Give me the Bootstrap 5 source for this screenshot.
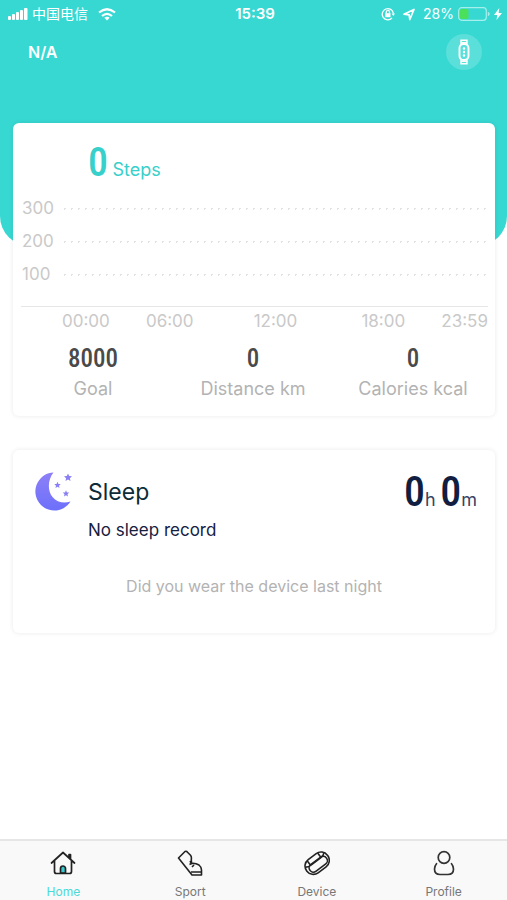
<!DOCTYPE html>
<html lang="en">
<head>
<meta charset="utf-8">
<meta name="viewport" content="width=device-width, initial-scale=1">
<title>Home</title>
<link href="https://cdn.jsdelivr.net/npm/bootstrap@5.3.0/dist/css/bootstrap.min.css" rel="stylesheet">
<style>
body{font-family:Inter,"Noto Sans CJK SC",sans-serif;background:#fff;color:#16203f}
.hero{background:#37d8d2;color:#fff;height:246px;border-radius:0 0 30px 30px}
.status{height:28px;padding:0 5px 0 8px;font-size:14px;line-height:20px}
.status .side{flex:1 1 0}
.carrier{margin:0 10px 0 4px}
.clock{font-weight:600;font-size:15px}
.topbar{padding:6px 25px 0 28px}
.user{font-size:16px;font-weight:600}
.band-btn{width:36px;height:36px;background:rgba(255,255,255,.18);border:0}
.content{margin-top:-123px;padding:0 12px 0 13px}
.panel{background:#fff;border-radius:6px;box-shadow:0 0 5px rgba(0,0,0,.09)}
.digits{font-family:"Roboto Condensed","Liberation Sans Narrow",Roboto,sans-serif;font-weight:500}
.steps{color:#37d0cb;padding:16px 0 0 75px;height:69px;line-height:48px}
.steps .digits{font-size:40px}
.steps .unit{font-size:18px}
.chart{padding:0 7px 0 8px;color:#c9c9c9;font-size:17px}
.grid-row{height:33px;line-height:33px}
.grid-row .lbl{width:40px;padding-left:1px}
.dots{height:3px;background:radial-gradient(circle,#e2e2e2 1px,transparent 1px) 0 0/7px 3px round}
.axis{border-top:1px solid #e6e6e6;margin-top:15px;padding:1px 0 1px 41px;line-height:26px}
.axis .mid{padding:0 28px 0 24px}
.stat-num{font-size:25px;line-height:30px;color:#4a4a4a}
.stat-lbl{font-size:18px;line-height:30px;color:#b3b3b3}
.stats{padding:9px 2px 12px 0}
.sleep{margin-top:34px;padding:22px 18px 35px 22px}
.sleep h2{font-size:23px;line-height:40px;font-weight:400;color:#0d2c38}
.sleep-text{padding-left:15px}
.sleep-time{line-height:40px;color:#121d42}
.sleep-time .digits{font-size:42px}
.sleep-time .u{font-size:18px;color:#3a4263}
.record{font-size:17px;line-height:36px}
.hint{font-size:16px;line-height:24px;color:#b3b3b3;margin-top:26px;padding-right:4px}
.tabs{background:#f9f9f9;border-top:2px solid #e6e6e6;height:61px}
.tabs a{font-size:12px;line-height:16px;color:#777;padding-top:9px}
.tabs a svg{margin-bottom:8px}
.tabs a.active{color:#4bd9d8}
</style>
<script src="https://cdn.jsdelivr.net/npm/bootstrap@5.3.0/dist/js/bootstrap.bundle.min.js"></script>
</head>
<body class="d-flex flex-column min-vh-100">
<header class="hero">
  <div class="status d-flex align-items-center">
    <div class="side d-flex align-items-center">
      <svg width="20" height="13" viewBox="0 0 20 13" fill="#fff" aria-hidden="true"><rect y="8" width="3" height="4" rx="1"/><rect x="4" y="6" width="3" height="6" rx="1"/><rect x="8" y="4" width="3" height="8" rx="1"/><rect x="12" y="2" width="3" height="10" rx="1"/><rect x="16" width="3.500" height="12" rx="1"/></svg>
      <span class="carrier">中国电信</span>
      <svg width="18" height="13" viewBox="0 0 18 13" fill="none" stroke="#fff" stroke-width="2.200" aria-hidden="true"><path d="M1 4.500Q9-2 17 4.500M4 8Q9 3.600 14 8"/><path d="M6.300 9.800Q9 7.700 11.700 9.800L9 12.600z" fill="#fff" stroke="none"/></svg>
    </div>
    <span class="clock">15:39</span>
    <div class="side d-flex align-items-center justify-content-end">
      <svg width="14" height="14" viewBox="0 0 14 14" fill="none" stroke="#fff" stroke-width="1.300" aria-hidden="true"><path d="M11 11A5.600 5.600 0 1 1 12.400 6.500"/><path d="M10.600 6.500h3.400l-1.700 2.500z" fill="#fff" stroke="none"/><rect x="4.300" y="6.200" width="5.200" height="4" fill="#fff" stroke="none"/><path d="M5.300 6.500V5a1.600 1.600 0 0 1 3.200 0v1.500"/></svg>
      <svg class="ms-2" width="12" height="13" viewBox="0 0 12 13" fill="none" stroke="#fff" stroke-width="1.700" stroke-linejoin="round" aria-hidden="true"><path d="M1 6.200 11 1.500 6.800 11.500 6.200 6.800z"/></svg>
      <span class="ms-2">28%</span>
      <svg class="ms-1" width="32" height="14" viewBox="0 0 32 14" aria-hidden="true"><rect x=".7" y=".7" width="27.600" height="12.600" rx="3" fill="none" stroke="#a5efec" stroke-width="1.200"/><rect x="2" y="2" width="8.500" height="10" rx="1.500" fill="#4be05c"/><path d="M29.800 4.800q2 .7 2 2.200t-2 2.200z" fill="#a5efec"/></svg>
      <svg class="ms-1" width="8" height="12" viewBox="0 0 8 12" fill="#fff" aria-hidden="true"><path d="M5.300 0 0 7h3.300L2.500 12 8 5H4.600z"/></svg>
    </div>
  </div>
  <div class="topbar d-flex justify-content-between align-items-center">
    <span class="user">N/A</span>
    <button class="band-btn rounded-circle p-0 d-flex align-items-center justify-content-center" type="button" aria-label="Band">
      <svg width="12" height="26" viewBox="0 0 12 26" fill="none" stroke="#fff" aria-hidden="true"><path d="M3 5.500V1.200h6v4.300M3 20.500v4.300h6v-4.300M3.500 3.800h5M3.500 22.200h5" stroke-width="1.400"/><rect x="1.500" y="5" width="9" height="16" rx="4" stroke-width="1.900"/><g fill="#fff" stroke="none"><circle cx="6" cy="9.500" r="1.200"/><circle cx="6" cy="13" r="1.200"/><circle cx="6" cy="16.500" r="1.200"/></g></svg>
    </button>
  </div>
</header>

<main class="content flex-grow-1">
  <section class="panel">
    <div class="steps"><span class="digits">0</span> <span class="unit">Steps</span></div>
    <div class="chart">
      <div class="grid-row d-flex align-items-center"><span class="lbl">300</span><div class="dots flex-grow-1"></div></div>
      <div class="grid-row d-flex align-items-center"><span class="lbl">200</span><div class="dots flex-grow-1"></div></div>
      <div class="grid-row d-flex align-items-center"><span class="lbl">100</span><div class="dots flex-grow-1"></div></div>
      <div class="axis d-flex justify-content-between"><span>00:00</span><span>06:00</span><span class="mid">12:00</span><span>18:00</span><span>23:59</span></div>
    </div>
    <div class="stats row g-0 text-center">
      <div class="col"><div class="digits stat-num">8000</div><div class="stat-lbl">Goal</div></div>
      <div class="col"><div class="digits stat-num">0</div><div class="stat-lbl">Distance km</div></div>
      <div class="col"><div class="digits stat-num">0</div><div class="stat-lbl">Calories kcal</div></div>
    </div>
  </section>

  <section class="panel sleep">
    <div class="d-flex align-items-start">
      <svg width="38" height="40" viewBox="0 0 38 40" aria-hidden="true">
        <defs><linearGradient id="night" x1="0" y1="0" x2="0" y2="1"><stop offset="0" stop-color="#8d80f6"/><stop offset="1" stop-color="#6d70fb"/></linearGradient>
        <path id="star" d="M0-4 1.200-1.400 4-1.200 1.900.8 2.500 3.600 0 2.100-2.500 3.600-1.900.8-4-1.200-1.200-1.400z"/></defs>
        <path d="M18.500.5C12.500 8 12.500 19 17.500 25 22 30.500 29 31.500 35.500 29.500A19 19 0 1 1 18.500.5z" fill="url(#night)"/>
        <g fill="#8a80f4"><use href="#star" transform="translate(33 5.500)"/><use href="#star" transform="translate(22.500 13) scale(.8)"/><use href="#star" transform="translate(31 21.500) scale(.8)"/></g>
      </svg>
      <div class="sleep-text flex-grow-1"><h2 class="m-0">Sleep</h2><div class="record">No sleep record</div></div>
      <div class="sleep-time"><span class="digits">0</span><span class="u">h</span> <span class="digits">0</span><span class="u">m</span></div>
    </div>
    <p class="hint text-center mb-0">Did you wear the device last night</p>
  </section>
</main>

<nav class="tabs d-flex" aria-label="Main">
  <a href="#" class="active flex-fill w-25 d-flex flex-column align-items-center text-decoration-none" aria-current="page">
    <svg width="26" height="26" viewBox="0 0 26 26" fill="none" stroke="#222" stroke-width="1.700" stroke-linecap="round" stroke-linejoin="round" aria-hidden="true"><path d="M10.500 23v-4.500a2.500 2.500 0 0 1 5 0V23z" fill="#37c8d0"/><path d="M1.500 13 13 2.500 24.500 13M4.500 11v10.500Q4.500 23.500 6.500 23.500h13q2 0 2-2V11M19 7V4.500h1.500V9"/></svg>
    Home</a>
  <a href="#" class="flex-fill w-25 d-flex flex-column align-items-center text-decoration-none">
    <svg width="26" height="26" viewBox="0 0 26 26" fill="none" stroke="#222" stroke-width="1.600" stroke-linejoin="round" aria-hidden="true"><path d="M1.500 8 8 1.500q1.500-.7 2.500.8l3 3q1.300 1.700.8 3.700l.2 4.500q4-.5 7.500 1.500 2.500 2 2.500 5v5H15z"/><path d="M13 11l1.500 2.500-2 1M17 15l-2 2M14 22h10.500"/></svg>
    Sport</a>
  <a href="#" class="flex-fill w-25 d-flex flex-column align-items-center text-decoration-none">
    <svg width="26" height="26" viewBox="0 0 26 26" fill="none" stroke="#222" stroke-width="1.600" stroke-linejoin="round" aria-hidden="true"><g transform="rotate(-37 13 13)"><rect x="0" y="5" width="26" height="16.500" rx="8"/><rect x="3" y="10.500" width="20.500" height="8.500" rx="4"/><path d="M1.500 9.500Q4 11.500 7 11h12q4 0 5.500-2M6.500 5.500v5.500M19.500 5.500v5.500"/></g></svg>
    Device</a>
  <a href="#" class="flex-fill w-25 d-flex flex-column align-items-center text-decoration-none">
    <svg width="26" height="26" viewBox="0 0 26 26" fill="none" stroke="#333" stroke-width="1.700" stroke-linecap="round" aria-hidden="true"><circle cx="13" cy="7.500" r="5.800"/><path d="M5.500 13.700Q3.500 16 3.500 19q0 5.500 5.500 5.500h8q5.500 0 5.500-5.500 0-3-2-5.300"/></svg>
    Profile</a>
</nav>
</body>
</html>
